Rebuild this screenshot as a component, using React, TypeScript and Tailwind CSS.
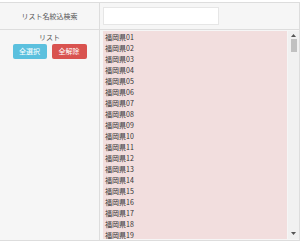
import React from 'react';

const items = Array.from({ length: 19 }, (_, i) => `福岡県${String(i + 1).padStart(2, '0')}`);

export default function App() {
  return (
    <div className="w-[300px] h-[243px] bg-white overflow-hidden" style={{ fontFamily: '"Noto Sans CJK JP", "Noto Sans", sans-serif' }}>
      <div className="mt-[2px] border-t border-b border-r border-[#dddddd] bg-[#f6f6f6]">
        {/* search row */}
        <div className="grid grid-cols-[100px_1fr] h-[27px] border-b border-[#dddddd]">
          <div className="border-r border-[#dddddd] flex items-center justify-center text-[7px] text-[#555]">
            リスト名絞込検索
          </div>
          <div className="flex items-center pl-[3px]">
            <input className="w-[116px] h-[18px] bg-white border border-[#e6e6e6] outline-none" />
          </div>
        </div>

        {/* list row */}
        <div className="grid grid-cols-[100px_1fr] h-[210px]">
          <div className="border-r border-[#dddddd] flex flex-col items-center pt-[2px]">
            <span className="text-[7px] leading-[10px] text-[#555]">リスト</span>
            <div className="flex gap-[5px] mt-[2px]">
              <button className="w-[34px] h-[15px] rounded-[2px] bg-[#5bc0de] text-white text-[7px] leading-none">全選択</button>
              <button className="w-[35px] h-[15px] rounded-[2px] bg-[#d9534f] text-white text-[7px] leading-none">全解除</button>
            </div>
          </div>
          <div className="flex pl-[3px] pt-[1px] pb-[1px]">
            <div className="w-[184px] h-[208px] bg-[#f2dede] overflow-hidden pl-[2px] pt-[1px]">
              {items.map((t) => (
                <div key={t} className="text-[7px] leading-[11px] h-[11px] text-[#333]">{t}</div>
              ))}
            </div>
            <div className="w-[11px] h-[208px] bg-[#f1f1f1] flex flex-col items-center ml-[1px]">
              <svg width="7" height="5" viewBox="0 0 7 5" className="mt-[2px]">
                <path d="M3.5 1 L6 4 L1 4 Z" fill="#555" />
              </svg>
              <div className="w-[6px] h-[13px] bg-[#c1c1c1] mt-[1px]" />
              <div className="flex-1" />
              <svg width="7" height="5" viewBox="0 0 7 5" className="mb-[3px]">
                <path d="M1 1 L6 1 L3.5 4 Z" fill="#555" />
              </svg>
            </div>
          </div>
        </div>
      </div>
    </div>
  );
}
